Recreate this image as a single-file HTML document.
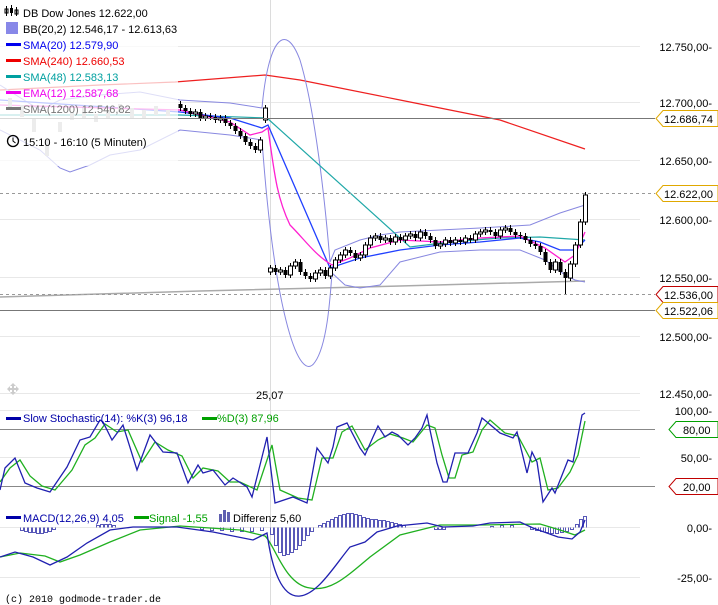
<!DOCTYPE html>
<html><head><meta charset="utf-8"><style>
html,body{margin:0;padding:0;background:#fff;width:718px;height:605px;overflow:hidden}
svg{display:block;font-family:"Liberation Sans",sans-serif}
.b{fill:#000}.w{fill:#fff;stroke:#000;stroke-width:1}.g{fill:#bbb}
</style></head><body>
<svg width="718" height="605" viewBox="0 0 718 605" xmlns="http://www.w3.org/2000/svg">
<g stroke="#e8e8e8" stroke-width="1">
<line x1="0" y1="46.5" x2="640" y2="46.5"/><line x1="0" y1="102.5" x2="640" y2="102.5"/>
<line x1="0" y1="160.5" x2="640" y2="160.5"/><line x1="0" y1="219.5" x2="640" y2="219.5"/>
<line x1="0" y1="277.5" x2="640" y2="277.5"/><line x1="0" y1="336.5" x2="640" y2="336.5"/>
<line x1="0" y1="393.5" x2="640" y2="393.5"/>
<line x1="0" y1="410.5" x2="640" y2="410.5"/><line x1="0" y1="457.5" x2="640" y2="457.5"/>
<line x1="0" y1="527.5" x2="640" y2="527.5"/><line x1="0" y1="577.5" x2="640" y2="577.5"/>
<line x1="270.5" y1="0" x2="270.5" y2="605" stroke="#dcdcdc"/>
</g>
<polyline fill="none" stroke="#ee2020" stroke-width="1.2" points="0,90 100,85 175,82 265,75 300,80 400,100 500,120 585,149"/>
<polyline fill="none" stroke="#aaa" stroke-width="1.5" points="0,297 200,291 400,286 585,281"/>
<path fill="none" stroke="#8888e0" d="M0,85 L40,110 60,100 100,95 140,92 180,100 230,103 262,108 C268,40 285,20 300,60 C315,110 325,200 330,262 L335,250 360,240 380,235 400,232 440,230 480,228 530,225 560,213 585,205"/>
<path fill="none" stroke="#8888e0" d="M0,130 L40,150 60,168 70,172 90,165 110,155 140,150 180,130 230,135 262,140 C275,320 300,385 315,362 C327,345 330,300 332,273 L345,285 360,288 380,285 400,262 440,252 480,250 520,250 545,260 565,275 575,280 585,282"/>
<polyline fill="none" stroke="#20a8a8" stroke-width="1.2" points="0,115 180,115 267,118 410,247 450,242 500,238 540,237 585,240"/>
<polyline fill="none" stroke="#2040ff" stroke-width="1.3" points="0,100 180,112 230,118 262,128 268,125 330,268 360,258 400,250 440,245 480,242 520,238 540,242 560,250 575,250 585,240"/>
<path fill="none" stroke="#ff20d0" stroke-width="1.3" d="M0,105 L180,110 230,122 250,135 262,132 268,128 C275,180 278,200 290,225 C305,240 315,255 332,265 L350,258 370,248 400,240 440,242 480,238 520,236 545,248 565,262 575,255 585,232"/>
<g class="g">
<rect x="8" y="98" width="4" height="10"/><rect x="20" y="105" width="4" height="12"/><rect x="32" y="118" width="4" height="14"/><rect x="45" y="140" width="4" height="16"/><rect x="58" y="122" width="4" height="10"/><rect x="70" y="112" width="4" height="8"/><rect x="82" y="108" width="4" height="10"/><rect x="94" y="114" width="4" height="8"/><rect x="106" y="110" width="4" height="9"/><rect x="118" y="104" width="4" height="8"/><rect x="130" y="108" width="4" height="10"/><rect x="142" y="110" width="4" height="8"/><rect x="154" y="106" width="4" height="9"/><rect x="166" y="110" width="4" height="6"/>
</g>
<path stroke="#000" fill="none" d="M180.5 101V111M185.5 105V114M190.5 108V117M195.5 109V117M200.5 109V121M205.5 113V121M210.5 113V120M215.5 114V123M220.5 115V123M225.5 115V126M230.5 120V129M235.5 123V134M240.5 128V139M245.5 133V145M250.5 139V149M255.5 143V153M260.5 137V153M265.5 105V123M270.5 265V275M275.5 265V275M280.5 267V275M285.5 267V278M290.5 263V278M295.5 259V269M300.5 259V275M305.5 269V279M310.5 273V282M315.5 270V282M320.5 267V276M325.5 267V279M330.5 265V279M335.5 257V271M340.5 252V263M345.5 247V258M350.5 247V256M355.5 250V261M360.5 252V261M365.5 242V258M370.5 235V248M375.5 233V241M380.5 233V243M385.5 235V243M390.5 235V245M395.5 234V245M400.5 234V243M405.5 233V243M410.5 231V239M415.5 231V241M420.5 229V241M425.5 229V239M430.5 233V243M435.5 237V249M440.5 241V249M445.5 237V247M450.5 237V246M455.5 237V246M460.5 237V245M465.5 235V245M470.5 235V243M475.5 231V243M480.5 229V237M485.5 227V235M490.5 227V235M495.5 229V239M500.5 227V239M505.5 225V233M510.5 225V235M515.5 229V238M520.5 232V239M525.5 233V243M530.5 237V247M535.5 241V249M540.5 243V255M545.5 249V265M550.5 259V273M555.5 259V273M560.5 259V275M565.5 269V294M570.5 261V281M575.5 242V267M580.5 219V248M585.5 192V225"/>
<g>
<rect class="b" x="178.5" y="104" width="4" height="4"/><rect class="b" x="183.5" y="108" width="4" height="3"/><rect class="b" x="188.5" y="111" width="4" height="3"/><rect class="w" x="193.5" y="112" width="4" height="2"/><rect class="b" x="198.5" y="112" width="4" height="6"/><rect class="w" x="203.5" y="116" width="4" height="2"/><rect class="b" x="208.5" y="116" width="4" height="1"/><rect class="b" x="213.5" y="117" width="4" height="3"/><rect class="w" x="218.5" y="118" width="4" height="2"/><rect class="b" x="223.5" y="118" width="4" height="5"/><rect class="b" x="228.5" y="123" width="4" height="3"/><rect class="b" x="233.5" y="126" width="4" height="5"/><rect class="b" x="238.5" y="131" width="4" height="5"/><rect class="b" x="243.5" y="136" width="4" height="6"/><rect class="b" x="248.5" y="142" width="4" height="4"/><rect class="b" x="253.5" y="146" width="4" height="4"/><rect class="w" x="258.5" y="140" width="4" height="10"/><rect class="w" x="263.5" y="108" width="4" height="12"/>
<rect class="w" x="268.5" y="268" width="4" height="4"/><rect class="b" x="273.5" y="268" width="4" height="4"/><rect class="w" x="278.5" y="270" width="4" height="2"/><rect class="b" x="283.5" y="270" width="4" height="5"/><rect class="w" x="288.5" y="266" width="4" height="9"/><rect class="w" x="293.5" y="262" width="4" height="4"/><rect class="b" x="298.5" y="262" width="4" height="10"/><rect class="b" x="303.5" y="272" width="4" height="4"/><rect class="b" x="308.5" y="276" width="4" height="3"/><rect class="w" x="313.5" y="273" width="4" height="6"/><rect class="w" x="318.5" y="270" width="4" height="3"/><rect class="b" x="323.5" y="270" width="4" height="6"/><rect class="w" x="328.5" y="268" width="4" height="8"/><rect class="w" x="333.5" y="260" width="4" height="8"/><rect class="w" x="338.5" y="255" width="4" height="5"/><rect class="w" x="343.5" y="250" width="4" height="5"/><rect class="b" x="348.5" y="250" width="4" height="3"/><rect class="b" x="353.5" y="253" width="4" height="5"/><rect class="w" x="358.5" y="255" width="4" height="3"/><rect class="w" x="363.5" y="245" width="4" height="10"/><rect class="w" x="368.5" y="238" width="4" height="7"/><rect class="w" x="373.5" y="236" width="4" height="2"/><rect class="b" x="378.5" y="236" width="4" height="4"/><rect class="w" x="383.5" y="238" width="4" height="2"/><rect class="b" x="388.5" y="238" width="4" height="4"/><rect class="w" x="393.5" y="237" width="4" height="5"/><rect class="b" x="398.5" y="237" width="4" height="3"/><rect class="w" x="403.5" y="236" width="4" height="4"/><rect class="w" x="408.5" y="234" width="4" height="2"/><rect class="b" x="413.5" y="234" width="4" height="4"/><rect class="w" x="418.5" y="232" width="4" height="6"/><rect class="b" x="423.5" y="232" width="4" height="4"/><rect class="b" x="428.5" y="236" width="4" height="4"/><rect class="b" x="433.5" y="240" width="4" height="6"/><rect class="w" x="438.5" y="244" width="4" height="2"/><rect class="w" x="443.5" y="240" width="4" height="4"/><rect class="b" x="448.5" y="240" width="4" height="3"/><rect class="w" x="453.5" y="240" width="4" height="3"/><rect class="b" x="458.5" y="240" width="4" height="2"/><rect class="w" x="463.5" y="238" width="4" height="4"/><rect class="b" x="468.5" y="238" width="4" height="2"/><rect class="w" x="473.5" y="234" width="4" height="6"/><rect class="w" x="478.5" y="232" width="4" height="2"/><rect class="w" x="483.5" y="230" width="4" height="2"/><rect class="b" x="488.5" y="230" width="4" height="2"/><rect class="b" x="493.5" y="232" width="4" height="4"/><rect class="w" x="498.5" y="230" width="4" height="6"/><rect class="w" x="503.5" y="228" width="4" height="2"/><rect class="b" x="508.5" y="228" width="4" height="4"/><rect class="b" x="513.5" y="232" width="4" height="3"/><rect class="b" x="518.5" y="235" width="4" height="1"/><rect class="b" x="523.5" y="236" width="4" height="4"/><rect class="b" x="528.5" y="240" width="4" height="4"/><rect class="b" x="533.5" y="244" width="4" height="2"/><rect class="b" x="538.5" y="246" width="4" height="6"/><rect class="b" x="543.5" y="252" width="4" height="10"/><rect class="b" x="548.5" y="262" width="4" height="8"/><rect class="w" x="553.5" y="262" width="4" height="8"/><rect class="b" x="558.5" y="262" width="4" height="10"/><rect class="b" x="563.5" y="272" width="4" height="6"/><rect class="w" x="568.5" y="264" width="4" height="14"/><rect class="w" x="573.5" y="245" width="4" height="19"/><rect class="w" x="578.5" y="222" width="4" height="23"/><rect class="w" x="583.5" y="195" width="4" height="27"/>
</g>
<line x1="0" y1="118.5" x2="655" y2="118.5" stroke="#777"/>
<line x1="0" y1="193.5" x2="655" y2="193.5" stroke="#999" stroke-dasharray="3,3"/>
<line x1="0" y1="294.5" x2="655" y2="294.5" stroke="#999" stroke-dasharray="3,3"/>
<line x1="0" y1="310.5" x2="655" y2="310.5" stroke="#777"/>
<line x1="0" y1="429.5" x2="655" y2="429.5" stroke="#888"/>
<line x1="0" y1="486.5" x2="655" y2="486.5" stroke="#888"/>
<polyline fill="none" stroke="#20b020" stroke-width="1.3" points="0,482 10,468 20,460 30,476 42,486 55,490 72,470 85,445 95,438 105,424 117,432 128,430 142,462 155,442 168,450 182,456 193,478 203,468 218,471 230,482 240,482 257,490 272,445 280,490 298,498 312,500 322,458 333,458 342,432 352,426 365,450 378,440 390,434 403,438 413,442 427,425 435,428 442,455 449,478 455,478 462,455 473,452 482,430 490,420 505,433 518,436 532,462 540,458 548,490 558,488 570,472 578,455 585,421"/>
<polyline fill="none" stroke="#2020b0" stroke-width="1.3" points="0,490 5,468 15,458 25,483 37,488 50,492 67,467 80,440 90,437 100,420 103,422 112,440 123,425 137,470 150,435 163,452 177,453 188,483 198,465 203,473 213,470 225,485 233,478 247,487 252,497 267,437 275,503 293,497 307,503 317,448 328,463 333,447 337,427 347,423 360,448 365,455 373,437 378,426 385,437 392,432 398,435 408,445 415,438 422,428 427,415 430,430 437,463 443,482 447,482 455,453 468,453 477,433 482,418 487,422 500,433 513,438 517,432 527,473 532,452 537,462 543,502 552,488 555,493 568,460 573,462 582,415 585,413"/>
<path fill="none" stroke="#5858b8" d="M20.5 527.5v3h3v-3M24.5 527.5v4h3v-4M28.5 527.5v5h3v-5M32.5 527.5v5h3v-5M36.5 527.5v6h3v-6M40.5 527.5v6h3v-6M44.5 527.5v5h3v-5M48.5 527.5v4h3v-4M52.5 527.5v2h3v-2M96.5 527.5v-2h3v2M100.5 527.5v-3h3v3M104.5 527.5v-3h3v3M108.5 527.5v-3h3v3M112.5 527.5v-2h3v2M200.5 527.5v2h3v-2M210.5 527.5v3h3v-3M220.5 527.5v3h3v-3M230.5 527.5v4h3v-4M240.5 527.5v4h3v-4M250.5 527.5v4h3v-4M260.5 527.5v3h3v-3M270.5 527.5v7h3v-7M274.5 527.5v18h3v-18M278.5 527.5v25h3v-25M282.5 527.5v28h3v-28M286.5 527.5v27h3v-27M290.5 527.5v25h3v-25M294.5 527.5v22h3v-22M298.5 527.5v18h3v-18M302.5 527.5v13h3v-13M306.5 527.5v8h3v-8M310.5 527.5v4h3v-4M318.5 527.5v-2h3v2M322.5 527.5v-4h3v4M326.5 527.5v-6h3v6M330.5 527.5v-8h3v8M334.5 527.5v-10h3v10M338.5 527.5v-12h3v12M342.5 527.5v-13h3v13M346.5 527.5v-14h3v14M350.5 527.5v-14h3v14M354.5 527.5v-13h3v13M358.5 527.5v-12h3v12M362.5 527.5v-10h3v10M366.5 527.5v-9h3v9M370.5 527.5v-8h3v8M374.5 527.5v-8h3v8M378.5 527.5v-7h3v7M382.5 527.5v-7h3v7M386.5 527.5v-6h3v6M390.5 527.5v-5h3v5M394.5 527.5v-4h3v4M398.5 527.5v-3h3v3M402.5 527.5v-2h3v2M434.5 527.5v2h3v-2M438.5 527.5v2h3v-2M442.5 527.5v2h3v-2M490.5 527.5v-1h3v1M500.5 527.5v-2h3v2M510.5 527.5v-2h3v2M530.5 527.5v2h3v-2M535.5 527.5v3h3v-3M540.5 527.5v4h3v-4M545.5 527.5v5h3v-5M550.5 527.5v6h3v-6M555.5 527.5v6h3v-6M560.5 527.5v5h3v-5M565.5 527.5v4h3v-4M570.5 527.5v2h3v-2M575.5 527.5v-3h3v3M579.5 527.5v-8h3v8M583.5 527.5v-11h3v11"/>
<path fill="none" stroke="#20b020" stroke-width="1.3" d="M0,557 L20,553 45,556 60,562 80,555 110,542 140,530 180,526 240,530 265,536 C275,545 285,585 310,588 C330,592 345,578 370,557 L400,535 440,525 480,525 540,524 560,530 575,535 585,530"/>
<path fill="none" stroke="#2020b0" stroke-width="1.3" d="M0,557 L15,552 33,557 50,565 67,557 87,543 110,530 133,527 177,527 213,532 253,540 267,533 C272,570 282,598 300,596 C318,594 335,565 350,547 L365,542 377,532 397,526 427,523 443,527 473,526 490,523 520,522 533,528 558,537 572,539 580,532 585,520"/>
<rect x="0" y="0" width="178" height="166" fill="#fff" opacity="0.72"/>
<g font-size="11">
<g fill="#000"><rect x="6" y="6" width="1" height="10"/><rect x="5" y="9" width="3" height="4" fill="none" stroke="#000"/><rect x="11" y="5" width="1" height="11"/><rect x="10" y="8" width="3" height="5"/><rect x="16" y="7" width="1" height="9"/><rect x="15" y="10" width="3" height="4" fill="none" stroke="#000"/></g>
<text x="23" y="17">DB Dow Jones 12.622,00</text>
<rect x="6" y="22" width="12" height="12" fill="#8888e8"/>
<text x="23" y="33" fill="#000">BB(20,2) 12.546,17 - 12.613,63</text>
<rect x="6" y="43" width="15" height="3" fill="#0000ee"/><text x="23" y="49" fill="#0000ee">SMA(20) 12.579,90</text>
<rect x="6" y="59" width="15" height="3" fill="#ee0000"/><text x="23" y="65" fill="#ee0000">SMA(240) 12.660,53</text>
<rect x="6" y="75" width="15" height="3" fill="#00a0a0"/><text x="23" y="81" fill="#00a0a0">SMA(48) 12.583,13</text>
<rect x="6" y="91" width="15" height="3" fill="#ee00ee"/><text x="23" y="97" fill="#ee00ee">EMA(12) 12.587,68</text>
<rect x="6" y="107" width="15" height="3" fill="#777"/><text x="23" y="113" fill="#777">SMA(1200) 12.546,82</text>
<circle cx="13" cy="141" r="5.5" fill="none" stroke="#000" stroke-width="1.3"/><path d="M13 137.5V141l2.5 2" stroke="#000" fill="none"/>
<text x="23" y="146">15:10 - 16:10 (5 Minuten)</text>
</g>
<g font-size="11" fill="#000" text-anchor="end">
<text x="712" y="51">12.750,00-</text><text x="712" y="107">12.700,00-</text>
<text x="712" y="165">12.650,00-</text><text x="712" y="224">12.600,00-</text>
<text x="712" y="282">12.550,00-</text><text x="712" y="341">12.500,00-</text>
<text x="712" y="398">12.450,00-</text><text x="712" y="415">100,00-</text>
<text x="712" y="462">50,00-</text><text x="712" y="532">0,00-</text>
<text x="712" y="582">-25,00-</text>
</g>
<g font-size="11" fill="#000">
<path d="M663 110.5h55v16h-55l-7-8z" fill="#fff" stroke="#e0a800"/><text x="664" y="123">12.686,74</text>
<path d="M663 185.5h55v16h-55l-7-8z" fill="#fff" stroke="#e0a800"/><text x="664" y="198">12.622,00</text>
<path d="M663 286.5h55v16h-55l-7-8z" fill="#fff" stroke="#c00000"/><text x="664" y="299">12.536,00</text>
<path d="M663 302.5h55v16h-55l-7-8z" fill="#fff" stroke="#e0a800"/><text x="664" y="315">12.522,06</text>
<path d="M676 421.5h42v16h-42l-7-8z" fill="#fff" stroke="#00a000"/><text x="683" y="434">80,00</text>
<path d="M676 478.5h42v16h-42l-7-8z" fill="#fff" stroke="#c00000"/><text x="683" y="491">20,00</text>
<text x="256" y="399">25,07</text>
</g>
<g fill="#ccc"><path d="M13 383l3 3h-2v2h2v-2l3 3-3 3v-2h-2v2h2l-3 3-3-3h2v-2h-2v2l-3-3 3-3v2h2v-2h-2z"/></g>
<g font-size="11">
<rect x="6" y="417" width="15" height="3" fill="#0000a8"/><text x="23" y="422" fill="#0000a8">Slow Stochastic(14): %K(3) 96,18</text>
<rect x="202" y="417" width="15" height="3" fill="#00a000"/><text x="217" y="422" fill="#00a000">%D(3) 87,96</text>
<rect x="6" y="516" width="15" height="3" fill="#0000a8"/><text x="23" y="522" fill="#0000a8">MACD(12,26,9) 4,05</text>
<rect x="134" y="516" width="15" height="3" fill="#00a000"/><text x="149" y="522" fill="#00a000">Signal -1,55</text>
<g fill="#6060b0"><rect x="219" y="514" width="3" height="8"/><rect x="223" y="510" width="3" height="12"/><rect x="227" y="512" width="3" height="10"/></g>
<text x="233" y="522" fill="#000">Differenz 5,60</text>
</g>
<text x="5" y="602" font-family="Liberation Mono,monospace" font-size="10" fill="#000">(c) 2010 godmode-trader.de</text>
</svg>
</body></html>
